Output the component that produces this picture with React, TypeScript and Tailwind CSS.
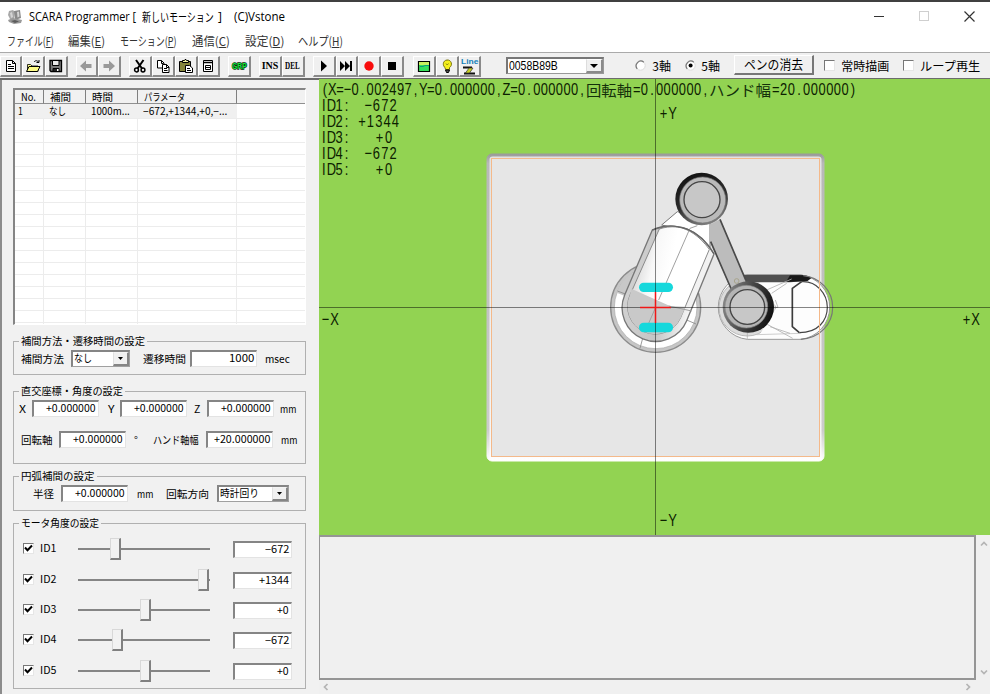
import React, { useLayoutEffect, useRef, useState } from "react";

type Kids = { children?: React.ReactNode };

// Squeezes or stretches a line of text to the width of its box.
function Fit({ className = "", children }: Kids & { className?: string }) {
  const box = useRef<HTMLSpanElement>(null);
  const text = useRef<HTMLSpanElement>(null);
  const [k, setK] = useState(1);
  useLayoutEffect(() => {
    if (box.current && text.current) setK(box.current.clientWidth / text.current.offsetWidth);
  }, []);
  return (
    <span ref={box} className={`block shrink-0 ${className}`}>
      <span ref={text} className="inline-block origin-left whitespace-pre" style={{ transform: `scaleX(${k})` }}>
        {children}
      </span>
    </span>
  );
}

function ToolButton({ children, className = "" }: Kids & { className?: string }) {
  return (
    <button
      className={`flex h-[21px] w-[22.8px] shrink-0 items-center justify-center border-t border-r-2 border-b-2 border-l border-t-white border-r-[#8a8a8a] border-b-[#8a8a8a] border-l-white bg-[#f0f0f0] ${className}`}
    >
      {children}
    </button>
  );
}

function Icon({ children }: Kids) {
  return (
    <svg width="16" height="16" viewBox="0 0 16 16" fill="none" stroke="#000" className="shrink-0">
      {children}
    </svg>
  );
}

function Field({ value, className = "", text }: { value: string; className?: string; text: string }) {
  return (
    <div
      className={`flex h-[17px] shrink-0 justify-end border-t-2 border-r border-b border-l-2 border-t-[#858585] border-r-[#e3e3e3] border-b-[#e3e3e3] border-l-[#858585] bg-white pr-[2px] text-[10.5px] leading-[12px] ${className}`}
    >
      <Fit className={text}>{value}</Fit>
    </div>
  );
}

function DropButton() {
  return (
    <span className="flex h-full w-[16px] items-center justify-center border-t border-r-2 border-b-2 border-l border-t-[#f4f4f4] border-r-[#858585] border-b-[#858585] border-l-[#e0e0e0] bg-[#f0f0f0]">
      <svg width="5" height="3" viewBox="0 0 5 3">
        <path d="M0 0h5L2.5 3z" fill="#000" />
      </svg>
    </span>
  );
}

function Select({ value, className = "", text }: { value: string; className?: string; text: string }) {
  return (
    <div
      className={`flex h-[17px] shrink-0 items-start justify-between border-t-2 border-r border-b border-l-2 border-t-[#858585] border-r-[#a0a0a0] border-b-[#a0a0a0] border-l-[#858585] bg-white pl-px text-[10.5px] leading-[12px] ${className}`}
    >
      <Fit className={text}>{value}</Fit>
      <DropButton />
    </div>
  );
}

function Group({ title, titleWidth, className = "", children }: Kids & { title: string; titleWidth: string; className?: string }) {
  return (
    <fieldset className={`ml-[13px] w-[293px] border border-[#b0b0b0] ${className}`}>
      <legend className="ml-[5px] px-[2px] text-[10.5px] leading-[12px]">
        <Fit className={titleWidth}>{title}</Fit>
      </legend>
      {children}
    </fieldset>
  );
}

function Check({ checked = false, className = "" }: { checked?: boolean; className?: string }) {
  return (
    <span
      className={`block h-[11px] w-[11px] shrink-0 border-t-[1.5px] border-r border-b border-l-[1.5px] border-t-[#777] border-r-[#e6e6e6] border-b-[#e6e6e6] border-l-[#777] bg-white ${className}`}
    >
      {checked && (
        <svg width="9" height="9" viewBox="0 0 9 9" fill="none" stroke="#000" strokeWidth="2">
          <path d="M1 3.5 3.5 6.2 8 1.5" />
        </svg>
      )}
    </span>
  );
}

function Radio({ on = false, className = "" }: { on?: boolean; className?: string }) {
  return (
    <svg width="11" height="11" viewBox="0 0 11 11" className={`shrink-0 ${className}`}>
      <circle cx="5.5" cy="5.5" r="4.7" fill="#fff" stroke="#dcdcdc" />
      <path d="M2.2 8.8A4.7 4.7 0 0 1 8.8 2.2" fill="none" stroke="#777" strokeWidth="1.2" />
      {on && <circle cx="5.6" cy="5.6" r="2" fill="#000" />}
    </svg>
  );
}

function MotorRow({ id, value, thumb, text, className = "" }: { id: string; value: string; thumb: string; text: string; className?: string }) {
  return (
    <div className={`flex h-[22px] items-start pl-[9px] ${className}`}>
      <Check checked className="mt-[5px]" />
      <Fit className="mt-[3px] ml-[6px] w-[16px] text-[10px] leading-[14px]">{id}</Fit>
      <div className="ml-[22px] h-[22px] w-[132px] bg-[linear-gradient(#858585,#858585)] bg-[length:132px_2px] bg-[position:0_10px] bg-no-repeat">
        <div className={`h-[22px] w-[11px] border-t border-r-2 border-b-2 border-l border-t-[#d8d8d8] border-r-[#808080] border-b-[#808080] border-l-[#d8d8d8] bg-[#f2f2f2] ${thumb}`} />
      </div>
      <Field value={value} text={text} className="mt-[3px] ml-[23px] w-[59px]" />
    </div>
  );
}

const bodyRows = Array.from({ length: 18 }, (_, i) => i);

function MotionList() {
  const cols = "grid grid-cols-[29px_42px_52px_99px_1fr]";
  const head = "flex items-center border-r border-r-[#808080] border-b border-b-[#909090] bg-[#f1f1f1] pl-[6px]";
  const cell = "border-r border-r-[#ececec]";
  return (
    <div className="mt-[8px] ml-[13px] h-[237px] w-[293px] shrink-0 overflow-hidden border-t-2 border-r border-b border-l-2 border-t-[#858585] border-r-white border-b-white border-l-[#858585] bg-white text-[10.5px]">
      <div className={`${cols} h-[14px] leading-[13px]`}>
        <span className={head}><Fit className="w-[15px]">No.</Fit></span>
        <span className={head}><Fit className="w-[21px]">補間</Fit></span>
        <span className={head}><Fit className="w-[21px]">時間</Fit></span>
        <span className={head}><Fit className="w-[41px]">パラメータ</Fit></span>
        <span className="border-b border-[#909090] bg-[#f1f1f1]" />
      </div>
      <div className={`${cols} h-[14px] leading-[13px]`}>
        <span className="bg-[#f0f0f0] pl-[3px]"><Fit className="w-[5px]">1</Fit></span>
        <span className="bg-[#f0f0f0] pl-[5px]"><Fit className="w-[17px]">なし</Fit></span>
        <span className="bg-[#f0f0f0] pl-[5px]"><Fit className="w-[39px]">1000m...</Fit></span>
        <span className="bg-[#f0f0f0] pl-[5px]"><Fit className="w-[84px]">−672,+1344,+0,−...</Fit></span>
        <span />
      </div>
      {bodyRows.map((i) => (
        <div key={i} className={`${cols} h-[12px] border-t border-[#ececec]`}>
          <span className={cell} />
          <span className={cell} />
          <span className={cell} />
          <span className={cell} />
          <span />
        </div>
      ))}
    </div>
  );
}

const SQUEEZE = 0.76;

// Fixed-pitch, condensed lettering: every character is centred in its own cell.
function Label({ x, y, pitch = 7.6, children }: { x: number; y: number; pitch?: number; children: string }) {
  const xs = Array.from(children, (_, i) => ((x + (i + 0.5) * pitch) / SQUEEZE).toFixed(2)).join(" ");
  return (
    <text x={xs} y={y} textAnchor="middle" transform={`scale(${SQUEEZE} 1)`} className="fill-[#0c2000] font-['Liberation_Sans',sans-serif] text-[17px]">
      {children}
    </text>
  );
}

function Kanji({ x, y, w, children }: Kids & { x: number; y: number; w: number }) {
  return (
    <text x={x} y={y} textLength={w} lengthAdjust="spacingAndGlyphs" className="fill-[#14300a] font-['Noto_Sans_CJK_JP',sans-serif] text-[15px]">
      {children}
    </text>
  );
}

function ArmView() {
  return (
    <svg width="671" height="456" viewBox="319 79 671 456" className="block bg-[#92d352]">
      <defs>
        <linearGradient id="plate" x1="0" y1="0" x2="0" y2="1">
          <stop offset="0" stopColor="#9a9a9a" />
          <stop offset="0.03" stopColor="#b8b8b8" />
          <stop offset="0.9" stopColor="#cccccc" />
          <stop offset="1" stopColor="#ffffff" />
        </linearGradient>
        <linearGradient id="lip" x1="0" y1="0" x2="0" y2="1">
          <stop offset="0" stopColor="#e2e2e2" />
          <stop offset="0.95" stopColor="#f6f6f6" />
          <stop offset="1" stopColor="#ffffff" />
        </linearGradient>
        <linearGradient id="body" x1="0" y1="0.3" x2="1" y2="0.6">
          <stop offset="0" stopColor="#c9c9c9" />
          <stop offset="0.3" stopColor="#f8f8f8" />
          <stop offset="0.5" stopColor="#ffffff" />
        </linearGradient>
        <linearGradient id="shell" x1="0" y1="0.4" x2="1" y2="0.6">
          <stop offset="0" stopColor="#d2d2d2" />
          <stop offset="0.45" stopColor="#c6c6c6" />
          <stop offset="0.75" stopColor="#f2f2f2" />
        </linearGradient>
        <linearGradient id="ringA" x1="0.2" y1="0" x2="0.6" y2="1">
          <stop offset="0" stopColor="#101010" />
          <stop offset="0.55" stopColor="#2c2c2c" />
          <stop offset="1" stopColor="#808080" />
        </linearGradient>
        <linearGradient id="ringB" x1="0" y1="0.3" x2="1" y2="0.6">
          <stop offset="0" stopColor="#8c8c8c" />
          <stop offset="0.5" stopColor="#444" />
          <stop offset="1" stopColor="#101010" />
        </linearGradient>
      </defs>

      <rect x="487" y="154" width="337" height="307" rx="5" fill="url(#plate)" stroke="url(#plate)" />
      <rect x="489.500" y="156.500" width="332" height="304" rx="3" fill="url(#lip)" />
      <rect x="491.500" y="158.500" width="328" height="298" fill="#e6e6e6" stroke="#f4b98a" />

      <g transform="translate(590 160) scale(0.33333)" strokeLinejoin="round">
        {/* base */}
        <circle cx="197" cy="442" r="135" fill="#c6c6c6" stroke="#8c8c8c" strokeWidth="4" />
        <circle cx="197" cy="442" r="124" fill="#fff" stroke="#aaa" strokeWidth="2" />
        <path d="M80 398A124 124 0 0 1 132 335L126 365 110 410z" fill="#c8c8c8" />
        <path d="M82 393l32 12M158 535l-8 30M290 480l28 12" stroke="#888" strokeWidth="2.500" />
        {/* upper arm */}
        <path d="M215 195 262 155 360 185 360 262 300 215z" fill="#fff" stroke="#777" strokeWidth="3" />
        <path d="M187 210 104 405A100 100 0 0 0 290 482L372 282C350 245 310 205 262 200 230 197 208 203 187 210z" fill="url(#shell)" stroke="#777" strokeWidth="4" />
        <path d="M208 207 120 405A80 80 0 0 0 272 473L358 268C330 230 295 205 262 201 240 199 222 202 208 207z" fill="url(#body)" stroke="#8a8a8a" strokeWidth="3" />
        <path d="M124 386 240 438 287 440 272 473A80 80 0 0 1 120 405z" fill="#c9c9c9" />
        <path d="M300 205 206 420M300 205 322 197M236 438 305 453M197 442 165 515" fill="none" stroke="#a0a0a0" strokeWidth="3" />
        <path d="M187 210C230 190 260 198 290 207 325 220 350 245 372 282" fill="none" stroke="#666" strokeWidth="4" />
        {/* wrist housing */}
        <path d="M472 345H632A97 97 0 0 1 632 538H472A97 97 0 0 1 472 345z" fill="#fdfdfd" stroke="#999" strokeWidth="3" />
        <circle cx="472" cy="443" r="85" fill="#dcdcdc" stroke="#b8b8b8" strokeWidth="3" />
        <path d="M500 360H632A80 80 0 0 1 632 522H510L560 442z" fill="#fdfdfd" />
        <path d="M500 524 632 520" stroke="#c4c4c4" strokeWidth="2.500" />
        <path d="M440 344H632C645 344 655 348 664 353L652 363 600 367H468z" fill="#505050" />
        <path d="M600 346H640L664 354 652 363 588 366z" fill="#181818" />
        <path d="M530 390 605 357M530 492 608 535M545 400 590 370M556 420 564 442 556 442M540 500 600 520" fill="none" stroke="#b0b0b0" strokeWidth="2.500" />
        <path d="M635 365 607 385V500L628 518" fill="none" stroke="#3c3c3c" strokeWidth="5" />
        <path d="M635 365C680 362 712 402 712 442S684 518 628 518" fill="none" stroke="#444" strokeWidth="3.500" />
        <path d="M640 347C690 352 728 392 728 442S690 535 632 538" fill="none" stroke="#777" strokeWidth="3.500" />
        <path d="M472 516v22" stroke="#aaa" strokeWidth="2" />
        {/* forearm */}
        <path d="M357 195 390 178 468 362 425 392 360 245z" fill="#bcbcbc" />
        <path d="M390 178 468 362M425 390 362 245" stroke="#4a4a4a" strokeWidth="5" fill="none" />
        <circle cx="440" cy="363" r="7" fill="none" stroke="#a8a48c" strokeWidth="3" />
        {/* joints */}
        <circle cx="335" cy="117" r="79" fill="url(#ringA)" />
        <circle cx="338" cy="120" r="69" fill="#bababa" stroke="#777" strokeWidth="2" />
        <circle cx="336" cy="119" r="54" fill="#c7c7c7" stroke="#454545" strokeWidth="4" />
        <circle cx="475" cy="441" r="77" fill="url(#ringB)" />
        <circle cx="469" cy="440" r="64" fill="#b4b4b4" stroke="#888" strokeWidth="2" />
        <circle cx="472" cy="441" r="52" fill="#c7c7c7" stroke="#454545" strokeWidth="4" />
        {/* fingers */}
        <rect x="147" y="368" width="102" height="28" rx="14" fill="#16d8dc" />
        <rect x="147" y="488" width="102" height="29" rx="14" fill="#16d8dc" />
      </g>
      <path d="M819.500 255V350" stroke="#f4b98a" />

      <path d="M655.500 79V535M319 307.500H990" stroke="#000" strokeOpacity="0.48" fill="none" />
      <path d="M655.500 292V323M640 307.500H671" stroke="#f01818" strokeWidth="1.500" fill="none" />

      <Label x={321} y={95.500} pitch={7.57}>(X=−0.002497,Y=0.000000,Z=0.000000,</Label>
      <Kanji x={586} y={95.500} w={46}>回転軸</Kanji>
      <Label x={633} y={95.500} pitch={7.6}>=0.000000,</Label>
      <Kanji x={709} y={95.500} w={62}>ハンド幅</Kanji>
      <Label x={772} y={95.500} pitch={7.7}>=20.000000)</Label>
      <Label x={320} y={111.500}>ID1:</Label>
      <Label x={364} y={111.500} pitch={8.3}>−672</Label>
      <Label x={320} y={127.500}>ID2:</Label>
      <Label x={358} y={127.500} pitch={8.3}>+1344</Label>
      <Label x={320} y={143.500}>ID3:</Label>
      <Label x={375} y={143.500} pitch={9}>+0</Label>
      <Label x={320} y={159.500}>ID4:</Label>
      <Label x={364} y={159.500} pitch={8.3}>−672</Label>
      <Label x={320} y={175.500}>ID5:</Label>
      <Label x={375} y={175.500} pitch={9}>+0</Label>
      <Label x={659} y={119} pitch={9}>+Y</Label>
      <Label x={659} y={526} pitch={9}>−Y</Label>
      <Label x={321} y={325} pitch={9}>−X</Label>
      <Label x={962} y={325} pitch={9}>+X</Label>
    </svg>
  );
}

function TitleBar() {
  return (
    <header className="flex h-[31px] shrink-0 items-center border-t-2 border-[#404040] bg-white text-[12px] text-black">
      <svg width="16" height="16" viewBox="0 0 16 16" className="ml-[7px]">
        <path d="M2 2 6 1 8 3 7 10 3 10 1 6z" fill="#a8a8a8" />
        <path d="M7 2 13 1 14 9 8 11z" fill="#8a8a8a" />
        <path d="M3 4 5 3 6 8 4 9zM10 3l2-.5.5 5-2 1z" fill="#d4d4d4" />
        <path d="M1 11 6 9 15 11 14 14 7 15 2 13z" fill="#999" />
        <path d="M4 12 8 11 12 12.500 8 14z" fill="#5c5c5c" />
      </svg>
      <Fit className="ml-[6px] w-[107px] font-['Open_Sans',sans-serif]">SCARA Programmer [</Fit>
      <Fit className="ml-[6px] w-[72px]">新しいモーション</Fit>
      <Fit className="ml-[4px] w-[4px] font-['Open_Sans',sans-serif]">]</Fit>
      <Fit className="ml-[12px] w-[51px] font-['Open_Sans',sans-serif]">(C)Vstone</Fit>
      <svg width="110" height="14" viewBox="0 0 110 14" fill="none" stroke="#333" className="mr-[10px] mb-[2px] ml-auto">
        <path d="M4 7.500h10" />
        <rect x="49.500" y="2.500" width="9" height="9" stroke="#cfcfcf" />
        <path d="M94.500 2.500l10 10M104.500 2.500l-10 10" strokeWidth="1.200" />
      </svg>
    </header>
  );
}

function MenuBar() {
  return (
    <nav className="flex h-[21px] shrink-0 items-start bg-white pl-[7px] text-[12px] leading-[19px] text-[#333]">
      <Fit className="w-[47px]">ファイル(<u>F</u>)</Fit>
      <Fit className="ml-[14px] w-[37px]">編集(<u>E</u>)</Fit>
      <Fit className="ml-[15px] w-[57px]">モーション(<u>P</u>)</Fit>
      <Fit className="ml-[15px] w-[38px]">通信(<u>C</u>)</Fit>
      <Fit className="ml-[15px] w-[39px]">設定(<u>D</u>)</Fit>
      <Fit className="ml-[14px] w-[45px]">ヘルプ(<u>H</u>)</Fit>
    </nav>
  );
}

function Toolbar() {
  return (
    <div className="flex h-[28px] shrink-0 items-start border-t border-b-2 border-t-[#aaa] border-b-[#6c6c6c] bg-[#f0f0f0] pt-[3px]">
      <ToolButton className="w-[22px]">
        <Icon><path d="M3.500 2.500h6l3 3v8h-9zM9.500 2.500v3h3M5 6.500h3M5 8.500h6M5 10.500h6" fill="#fff" /></Icon>
      </ToolButton>
      <ToolButton>
        <Icon><path d="M2.500 13.500v-7h3l1.500 1.500h6v5.500z" fill="#ffff90" strokeWidth=".8" /><path d="M1.500 13.500 4 8.500h11l-2.500 5z" fill="#fdfb86" /><path d="M9 4c1.500-2 4-1.500 4.500.500M11.500 4.500h2.500V2" /></Icon>
      </ToolButton>
      <ToolButton>
        <Icon><path d="M2 2.500h11.500v11H3L2 12.500z" fill="#777" strokeWidth="1.300" /><path d="M4.500 2.500h6.500v5H4.500z" fill="#e8e8e8" /><path d="M5 10.500h6v3H5z" fill="#222" /><path d="M9 11h1.500v2H9z" fill="#fff" stroke="none" /></Icon>
      </ToolButton>
      <ToolButton className="ml-[8px]">
        <Icon><path d="M2 8 8 2.500v3.500h5.500v4H8v3.500z" fill="#999" stroke="none" /></Icon>
      </ToolButton>
      <ToolButton>
        <Icon><path d="M14 8 8 2.500v3.500H2.500v4H8v3.500z" fill="#999" stroke="none" /></Icon>
      </ToolButton>
      <ToolButton className="ml-[8px]">
        <Icon><path d="M4 2 10 10.500M11.500 2 5.500 10.500" strokeWidth="2" /><circle cx="4.500" cy="12" r="1.900" strokeWidth="1.500" /><circle cx="11" cy="12" r="1.900" strokeWidth="1.500" /></Icon>
      </ToolButton>
      <ToolButton>
        <Icon><path d="M2.500 2.500h4l2.500 2.500v5h-6.500zM6.500 2.500v3h2" fill="#fff" /><path d="M7.500 6.500h4l2.500 2.500v5.500h-6.500zM11.500 6.500v3h2.500M9 10.500h3M9 12.500h3.500" fill="#fff" /></Icon>
      </ToolButton>
      <ToolButton>
        <Icon><path d="M1.500 3.500h11v10h-11z" fill="#85853a" /><path d="M4.500 4.500v-2h2l.5-1h1l.5 1h2v2z" fill="#f2f29c" /><path d="M7.500 7.500h4l3 2.500v4.500h-7zM9 10.500h3M9 12.500h4" fill="#fff" /></Icon>
      </ToolButton>
      <ToolButton>
        <Icon><path d="M3.500 2.500h9v11h-9z" fill="#fff" /><path d="M4 4.500h8" strokeWidth="1.500" /><path d="M5.500 7.500h5v4h-5zM6 9.500h4" /></Icon>
      </ToolButton>
      <ToolButton className="ml-[8px]">
        <Fit className="w-[15px] font-['Liberation_Sans',sans-serif] text-[9px] leading-[14px] font-bold text-[#12e83c] [-webkit-text-stroke:1.5px_#052c08] [paint-order:stroke_fill]">GRP</Fit>
      </ToolButton>
      <ToolButton className="ml-[8px]">
        <Fit className="w-[17px] font-['Liberation_Serif',serif] text-[10px] leading-[14px] font-bold">INS</Fit>
      </ToolButton>
      <ToolButton>
        <Fit className="w-[15px] font-['Liberation_Serif',serif] text-[9.500px] leading-[14px] font-bold">DEL</Fit>
      </ToolButton>
      <ToolButton className="ml-[8px]">
        <Icon><path d="M5 2.500 11 8 5 13.500z" fill="#000" stroke="none" /></Icon>
      </ToolButton>
      <ToolButton>
        <Icon><path d="M2 3 7 8 2 13zM7 3 12 8 7 13zM12 3h2v10h-2z" fill="#000" stroke="none" /></Icon>
      </ToolButton>
      <ToolButton>
        <Icon><circle cx="8" cy="8" r="4.700" fill="#f80c0c" stroke="none" /></Icon>
      </ToolButton>
      <ToolButton>
        <Icon><path d="M4 4h8v8H4z" fill="#000" stroke="none" /></Icon>
      </ToolButton>
      <ToolButton className="ml-[9px]">
        <Icon><path d="M2.500 3.500h11v10h-11z" fill="#36e05c" strokeWidth="1.200" /><path d="M3 4h10v3H3z" fill="#c8f060" stroke="none" /><path d="M4 8.500h3l2-1h4" stroke="#0a9c80" /></Icon>
      </ToolButton>
      <ToolButton>
        <Icon><path d="M6 9.500C3.500 8 3.500 2.500 8 2s6 5.500 2.500 7.500v2h-4z" fill="#f5f01c" stroke="#77700c" /><path d="M7 5.500 8.200 7 9.500 5.500" stroke="#8a8412" /><path d="M6.500 12h4l-1 2.500h-2z" fill="#555" /></Icon>
      </ToolButton>
      <ToolButton>
        <span className="flex flex-col items-center">
          <Fit className="h-[8px] w-[17px] font-['Liberation_Sans',sans-serif] text-[8px] leading-[8px] font-bold text-[#1380b8]">Line</Fit>
          <svg width="16" height="9" viewBox="0 0 16 9"><path d="M2 1.500h9M3 7.500h11" stroke="#111" strokeWidth="1.800" /><path d="M8 2h4L8.500 7H4.500z" fill="#c8d020" stroke="#333" strokeWidth=".7" /></svg>
        </span>
      </ToolButton>
      <div className="mt-[1px] ml-[25px] flex h-[17px] w-[98px] items-start justify-between border-t-2 border-r border-b border-l-2 border-t-[#777] border-r-[#999] border-b-[#999] border-l-[#777] bg-white pl-[1px]">
        <Fit className="w-[49px] font-['Liberation_Sans',sans-serif] text-[13px] leading-[14px]">0058B89B</Fit>
        <span className="flex h-full w-[17px] items-center justify-center border-t border-r-2 border-b-2 border-l border-[#8a8a8a] border-t-white border-l-[#ddd] bg-[#f0f0f0]">
          <svg width="8" height="4" viewBox="0 0 8 4"><path d="M0 0h8L4 4z" fill="#000" /></svg>
        </span>
      </div>
      <div className="flex h-[18px] items-center text-[12px] leading-[17px]">
        <Radio className="ml-[31px]" />
        <Fit className="ml-[6px] w-[19px]">3軸</Fit>
        <Radio on className="ml-[14px]" />
        <Fit className="ml-[5px] w-[19px]">5軸</Fit>
        <button className="ml-[14px] flex h-[20px] w-[80px] items-center justify-center border-t border-r-2 border-b-2 border-l border-t-white border-r-[#777] border-b-[#777] border-l-white bg-[#f0f0f0] text-[13px] leading-[16px]">
          <Fit className="mb-[1px] w-[59px]">ペンの消去</Fit>
        </button>
        <Check className="ml-[10px]" />
        <Fit className="ml-[6px] w-[48px]">常時描画</Fit>
        <Check className="ml-[14px]" />
        <Fit className="ml-[6px] w-[60px]">ループ再生</Fit>
      </div>
    </div>
  );
}

function Chevron({ d }: { d: string }) {
  return (
    <svg width="8" height="8" viewBox="0 0 8 8" fill="none" stroke="#b4b4b4" strokeWidth="1.700">
      <path d={d} />
    </svg>
  );
}

export default function App() {
  return (
    <div className="flex h-[694px] w-[990px] flex-col overflow-hidden bg-[#f0f0f0] font-['Noto_Sans_CJK_JP',sans-serif] text-black">
      <TitleBar />
      <MenuBar />
      <Toolbar />
      <main className="flex min-h-0 flex-1">
        <aside className="flex w-[319px] shrink-0 flex-col border-l-2 border-[#8c8c8c] bg-[#f1f1f1]">
          <div className="-ml-[2px] flex flex-col">
            <MotionList />

            <Group title="補間方法・遷移時間の設定" titleWidth="w-[124px]" className="mt-[10px] h-[40px]">
              <div className="mt-[3px] flex items-center pl-[7px] text-[10.5px] leading-[15px]">
                <Fit className="w-[43px]">補間方法</Fit>
                <Select value="なし" text="w-[18px]" className="ml-[7px] w-[59px]" />
                <Fit className="ml-[13px] w-[43px]">遷移時間</Fit>
                <Field value="1000" text="w-[25px]" className="ml-[4px] w-[67px]" />
                <Fit className="ml-[8px] w-[25px]">msec</Fit>
              </div>
            </Group>

            <Group title="直交座標・角度の設定" titleWidth="w-[102px]" className="mt-[10px] h-[79px]">
              <div className="mt-[3px] flex items-center pl-[5px] text-[10.5px] leading-[15px]">
                <Fit className="w-[7px]">X</Fit>
                <Field value="+0.000000" text="w-[50px]" className="ml-[6px] w-[67px]" />
                <Fit className="ml-[9px] w-[7px]">Y</Fit>
                <Field value="+0.000000" text="w-[50px]" className="ml-[5px] w-[67px]" />
                <Fit className="ml-[7px] w-[6px]">Z</Fit>
                <Field value="+0.000000" text="w-[50px]" className="ml-[7px] w-[67px]" />
                <Fit className="ml-[6px] w-[16px]">mm</Fit>
              </div>
              <div className="mt-[14px] flex items-center pl-[7px] text-[10.5px] leading-[15px]">
                <Fit className="w-[32px]">回転軸</Fit>
                <Field value="+0.000000" text="w-[50px]" className="ml-[6px] w-[67px]" />
                <Fit className="ml-[8px] w-[4px]">°</Fit>
                <Fit className="ml-[15px] w-[46px]">ハンド軸幅</Fit>
                <Field value="+20.000000" text="w-[56px]" className="ml-[7px] w-[67px]" />
                <Fit className="ml-[8px] w-[16px]">mm</Fit>
              </div>
            </Group>

            <Group title="円弧補間の設定" titleWidth="w-[74px]" className="mt-[6px] h-[41px]">
              <div className="mt-[3px] flex items-center pl-[19px] text-[10.5px] leading-[15px]">
                <Fit className="w-[21px]">半径</Fit>
                <Field value="+0.000000" text="w-[50px]" className="ml-[7px] w-[67px]" />
                <Fit className="ml-[9px] w-[16px]">mm</Fit>
                <Fit className="ml-[13px] w-[43px]">回転方向</Fit>
                <Select value="時計回り" text="w-[39px]" className="ml-[8px] w-[72px]" />
              </div>
            </Group>

            <Group title="モータ角度の設定" titleWidth="w-[78px]" className="mt-[6px] h-[172px]">
              <MotorRow id="ID1" value="−672" text="w-[24px]" thumb="ml-[32px]" className="mt-[9px]" />
              <MotorRow id="ID2" value="+1344" text="w-[30px]" thumb="ml-[120px]" className="mt-[9px]" />
              <MotorRow id="ID3" value="+0" text="w-[12px]" thumb="ml-[62px]" className="mt-[8px]" />
              <MotorRow id="ID4" value="−672" text="w-[24px]" thumb="ml-[34px]" className="mt-[8px]" />
              <MotorRow id="ID5" value="+0" text="w-[12px]" thumb="ml-[62px]" className="mt-[9px]" />
            </Group>
          </div>
        </aside>

        <section className="flex min-w-0 flex-1 flex-col">
          <div className="-mt-px h-[456px] shrink-0">
            <ArmView />
          </div>
          <div className="flex h-[145px] shrink-0">
            <div className="w-[657px] border-t-2 border-r-2 border-b-2 border-l border-[#959595] bg-[#f0f0f0]" />
            <div className="flex flex-1 flex-col items-center justify-between pt-[5px] pb-[4px] pl-[2px]">
              <Chevron d="M1 5.500 4 2.500 7 5.500" />
              <Chevron d="M1 2.500 4 5.500 7 2.500" />
            </div>
          </div>
          <div className="flex flex-1 items-center justify-between pr-[18px] pl-[3px]">
            <Chevron d="M5.500 1 2.500 4 5.500 7" />
            <Chevron d="M2.500 1 5.500 4 2.500 7" />
          </div>
        </section>
      </main>
    </div>
  );
}
